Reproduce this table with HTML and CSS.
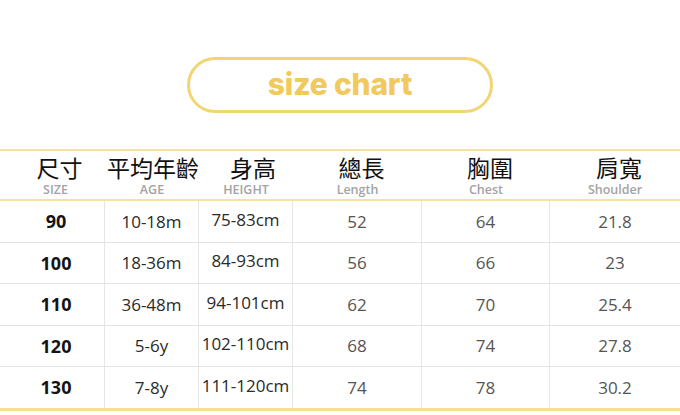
FILE: index.html
```html
<!DOCTYPE html>
<html lang="zh-Hant">
<head>
<meta charset="utf-8">
<link rel="stylesheet" href="styles.css">
</head>
<body>
<div class="page">
  <div class="title-wrap">
    <div class="pill">size chart</div>
  </div>
  <div class="chart">
    <div class="head">
      <div class="hcell first"><span class="zh">尺寸</span><span class="en">SIZE</span></div>
      <div class="hcell"><span class="zh zh-wide">平均年齡</span><span class="en">AGE</span></div>
      <div class="hcell"><span class="zh zh-far">身高</span><span class="en">HEIGHT</span></div>
      <div class="hcell"><span class="zh">總長</span><span class="en">Length</span></div>
      <div class="hcell"><span class="zh">胸圍</span><span class="en">Chest</span></div>
      <div class="hcell"><span class="zh">肩寬</span><span class="en">Shoulder</span></div>
    </div>
    <div class="row">
      <div class="cell size">90</div><div class="cell dark">10-18m</div><div class="cell dark up">75-83cm</div><div class="cell">52</div><div class="cell">64</div><div class="cell">21.8</div>
    </div>
    <div class="row">
      <div class="cell size">100</div><div class="cell dark">18-36m</div><div class="cell dark up">84-93cm</div><div class="cell">56</div><div class="cell">66</div><div class="cell">23</div>
    </div>
    <div class="row">
      <div class="cell size">110</div><div class="cell dark">36-48m</div><div class="cell dark up">94-101cm</div><div class="cell">62</div><div class="cell">70</div><div class="cell">25.4</div>
    </div>
    <div class="row">
      <div class="cell size">120</div><div class="cell dark">5-6y</div><div class="cell dark up">102-110cm</div><div class="cell">68</div><div class="cell">74</div><div class="cell">27.8</div>
    </div>
    <div class="row last">
      <div class="cell size">130</div><div class="cell dark">7-8y</div><div class="cell dark up">111-120cm</div><div class="cell">74</div><div class="cell">78</div><div class="cell">30.2</div>
    </div>
  </div>
</div>
</body>
</html>
```
FILE: styles.css
```css
html, body {
  margin: 0;
  padding: 0;
  background: #ffffff;
}
.page {
  width: 680px;
  height: 415px;
  overflow: hidden;
  font-family: "Open Sans", "Noto Sans CJK TC", sans-serif;
}
.title-wrap {
  display: flex;
  justify-content: center;
  padding-top: 57px;
}
.pill {
  box-sizing: border-box;
  width: 306px;
  height: 56px;
  border: 3px solid #f1d575;
  border-radius: 28px;
  display: flex;
  align-items: center;
  justify-content: center;
  font-family: "Inter", sans-serif;
  font-weight: 800;
  font-size: 30px;
  color: #f2c95c;
  letter-spacing: -0.2px;
  padding-bottom: 3px;
}
.chart {
  margin-top: 36px;
}
.head, .row {
  display: grid;
  grid-template-columns: 105px 94px 94px 129px 128px 130px;
}
.head {
  box-sizing: border-box;
  height: 52px;
  border-top: 2px solid #f3e2a2;
  border-bottom: 2px solid #f3e2a2;
}
.hcell {
  display: flex;
  flex-direction: column;
  align-items: center;
  padding-top: 3px;
  white-space: nowrap;
}
.hcell.first {
  padding-left: 6px;
}
.zh {
  font-family: "Noto Sans CJK TC", sans-serif;
  font-size: 23px;
  line-height: 27px;
  color: #111;
  padding-left: 8px;
}
.zh-wide {
  padding-left: 2px;
}
.zh-far {
  padding-left: 14px;
}
.en {
  font-family: "Open Sans", sans-serif;
  font-weight: 600;
  font-size: 12.5px;
  line-height: 14px;
  color: #a3a3a3;
  margin-top: 2px;
}
.row {
  box-sizing: border-box;
  height: 41.5px;
  border-bottom: 1px solid #e3e3e3;
}
.row.last {
  height: 43.5px;
  border-bottom: 3px solid #f6df93;
}
.cell {
  display: flex;
  align-items: center;
  justify-content: center;
  font-size: 17px;
  color: #555;
  border-right: 1px solid #e6e6e6;
  white-space: nowrap;
}
.cell:last-child {
  border-right: none;
}
.cell.size {
  font-weight: 700;
  color: #141414;
  font-size: 18px;
  padding-left: 8px;
}
.cell.dark {
  color: #2a2a2a;
}
.cell.up {
  padding-bottom: 4px;
  box-sizing: border-box;
}
```
